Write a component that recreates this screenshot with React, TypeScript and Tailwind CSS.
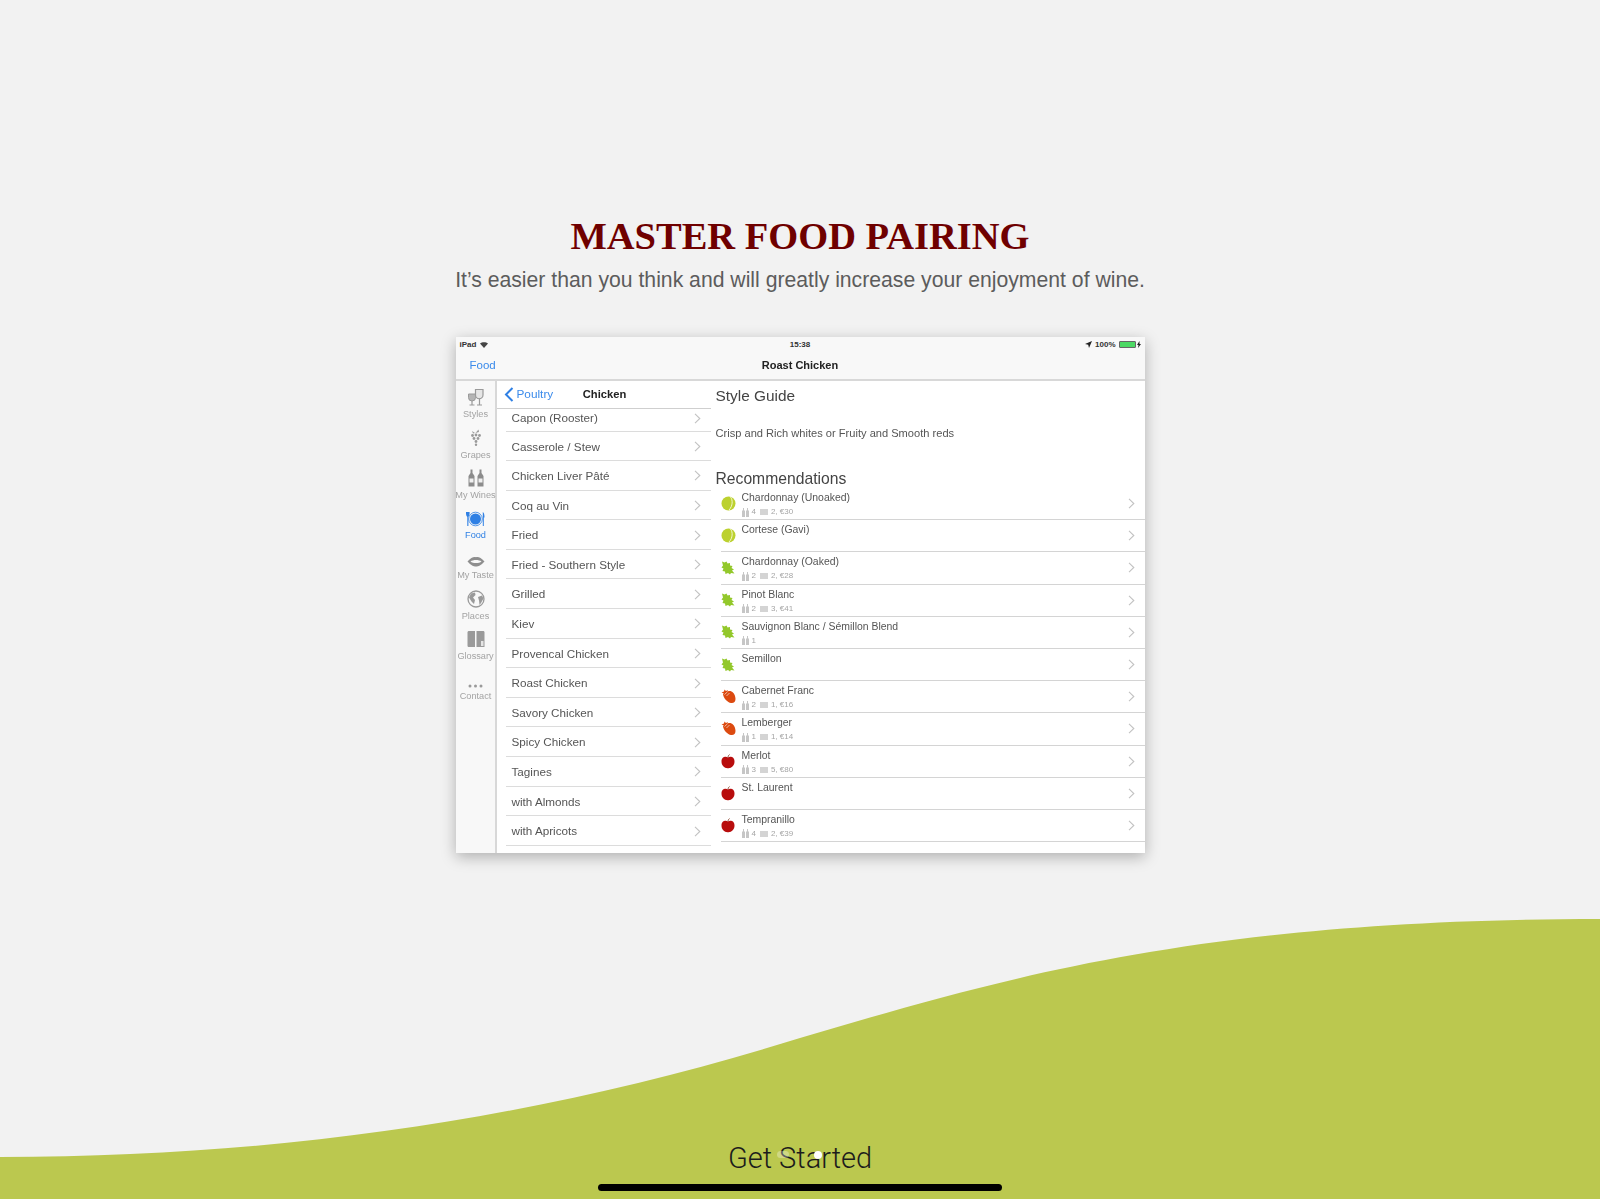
const sideTabs = [
  { label: "Styles", icon: "glasses" },
  { label: "Grapes", icon: "grapes" },
  { label: "My Wines", icon: "bottles" },
  { label: "Food", icon: "plate", active: true },
  { label: "My Taste", icon: "lips" },
  { label: "Places", icon: "globe" },
  { label: "Glossary", icon: "book" },
  { label: "Contact", icon: "dots" },
];

const dishes = [
  "Casserole / Stew",
  "Chicken Liver Pâté",
  "Coq au Vin",
  "Fried",
  "Fried - Southern Style",
  "Grilled",
  "Kiev",
  "Provencal Chicken",
  "Roast Chicken",
  "Savory Chicken",
  "Spicy Chicken",
  "Tagines",
  "with Almonds",
  "with Apricots",
];

const wines = [
  { name: "Chardonnay (Unoaked)", fruit: "lime", bottles: "4", rest: "2, €30" },
  { name: "Cortese (Gavi)", fruit: "lime" },
  { name: "Chardonnay (Oaked)", fruit: "leaf", bottles: "2", rest: "2, €28" },
  { name: "Pinot Blanc", fruit: "leaf", bottles: "2", rest: "3, €41" },
  { name: "Sauvignon Blanc / Sémillon Blend", fruit: "leaf", bottles: "1" },
  { name: "Semillon", fruit: "leaf" },
  { name: "Cabernet Franc", fruit: "berry", bottles: "2", rest: "1, €16" },
  { name: "Lemberger", fruit: "berry", bottles: "1", rest: "1, €14" },
  { name: "Merlot", fruit: "apple", bottles: "3", rest: "5, €80" },
  { name: "St. Laurent", fruit: "apple" },
  { name: "Tempranillo", fruit: "apple", bottles: "4", rest: "2, €39" },
];

function TabIcon({ name }: { name: string }) {
  const c = "#9a9a9a";
  if (name === "glasses")
    return (
      <svg width="18" height="18" viewBox="0 0 18 18" fill="none">
        <path d="M1.500 6h7v3.500a3.500 3.500 0 0 1-7 0z" fill="#b5b5b5" stroke={c} strokeWidth="1" />
        <path d="M8.500 1.500h7.500v5.500a3.700 3.700 0 0 1-7.500 0z" fill="#e6e6e6" stroke={c} strokeWidth="1.200" />
        <path d="M5 13v3.500M2.500 17h5M12.500 10.500v6M10 17h5" stroke={c} strokeWidth="1.200" />
      </svg>
    );
  if (name === "grapes")
    return (
      <svg width="14" height="18" viewBox="0 0 14 18" fill={c}>
        <path d="M6.500 4 9.500 0.500 10 3zM6 4 3 2 4 4.500z" />
        <circle cx="3.500" cy="6.500" r="1.400" />
        <circle cx="7" cy="6" r="1.400" />
        <circle cx="10.500" cy="6.500" r="1.400" />
        <circle cx="5" cy="9.500" r="1.400" />
        <circle cx="9" cy="9.500" r="1.400" />
        <circle cx="7" cy="12.500" r="1.400" />
        <circle cx="7" cy="15.800" r="1.200" />
      </svg>
    );
  if (name === "bottles")
    return (
      <svg width="16" height="18" viewBox="0 0 16 18" fill="#8c8c8c">
        <path d="M2.500 0.500h2v3.500l2 3v10.500h-6V7l2-3z" />
        <path d="M11.500 0.500h2v3.500l2 3v10.500h-6V7l2-3z" />
        <rect x="1.500" y="9.500" width="4" height="4" fill="#f0f0f0" />
        <rect x="10.500" y="9.500" width="4" height="4" fill="#f0f0f0" />
      </svg>
    );
  if (name === "plate")
    return (
      <svg width="19" height="16" viewBox="0 0 19 16" fill="#2f80e4">
        <circle cx="9.500" cy="8" r="5.500" />
        <circle cx="9.500" cy="8" r="6.800" fill="none" stroke="#2f80e4" strokeWidth="0.800" />
        <path d="M0 1h3.600v1.500C3.600 5 2.600 5.500 2.400 6v9H1.300V6C1.100 5.500 0 5 0 2.500z" />
        <path d="M16.800 1c1.200 0.500 1.700 2.500 1.700 5.500h-0.700V15h-1z" />
      </svg>
    );
  if (name === "lips")
    return (
      <svg width="18" height="11" viewBox="0 0 18 11" fill="none">
        <path d="M0.500 5.500C4 1.500 7 0.500 9 1.300 11 0.500 14 1.500 17.500 5.500 14 9.500 11.500 10.500 9 10.500S4 9.500 0.500 5.500z" fill="#8e8e8e" />
        <path d="M3.500 5.500C6 3.500 12 3.500 14.500 5.500 12 7.500 6 7.500 3.500 5.500z" fill="#f7f7f7" />
      </svg>
    );
  if (name === "globe")
    return (
      <svg width="18" height="18" viewBox="0 0 18 18" fill="none">
        <circle cx="9" cy="9" r="8" stroke={c} strokeWidth="1.300" />
        <path d="M2 7.500 4 3.500 8 2.500 8.500 5 6 7.500 8 10 7 14 4.500 11.500zM11 7l4-1.500 1.500 3L14 13l-1.500 2L12 10.500z" fill={c} />
      </svg>
    );
  if (name === "book")
    return (
      <svg width="18" height="18" viewBox="0 0 18 18" fill={c}>
        <path d="M0.500 2.500C0.500 1.500 1 1 2 1h6v16H2c-1 0-1.500-0.500-1.500-1.500z" />
        <path d="M9.500 1H16c1 0 1.500 0.500 1.500 1.500V17H9.500z" />
        <path d="M14 11h2.500v5H14z" fill="#e5e5e5" />
      </svg>
    );
  return (
    <svg width="15" height="4" viewBox="0 0 15 4" fill={c}>
      <circle cx="2" cy="2" r="1.500" />
      <circle cx="7.500" cy="2" r="1.500" />
      <circle cx="13" cy="2" r="1.500" />
    </svg>
  );
}

function FruitIcon({ name }: { name: string }) {
  if (name === "lime")
    return (
      <svg width="15" height="15" viewBox="0 0 15 15" fill="none">
        <circle cx="7.500" cy="7.500" r="7" fill="#bcd12f" />
        <path d="M9.500 1c2.500 3 2.300 9-1.500 13" stroke="#f3f7d0" strokeWidth="1" />
      </svg>
    );
  if (name === "leaf")
    return (
      <svg width="14" height="14" viewBox="0 0 14 14" fill="#93c82b">
        <path d="M1 0.500 3.500 1.500 5.500 0.500 6.500 2.500 9 2 9 4.500 11.500 5 10.500 7 13 8.500 11 9.500 13.500 12.500 10 12 9 13.500 7 12 4.500 13 4 10.500 1.500 10 2.500 7.500 0.500 6.500 2 4.500z" />
      </svg>
    );
  if (name === "berry")
    return (
      <svg width="15" height="15" viewBox="0 0 15 15">
        <path d="M2 5C4 2.500 8 1.500 10.500 2.500 13 3.500 14.500 7 14.500 10 14.500 13 12.500 14.500 10 14 6.500 13.500 2.500 9.500 2 5z" fill="#dc4a10" />
        <path d="M0.500 3.500 3 2.500 3.500 0.500 5 2 7 1 6 3.500 4 5.500 3 4.500z" fill="#dc4a10" />
        <path d="M3.500 5.500 6.500 2.800M5.500 7l3-3" stroke="#f8e8df" strokeWidth="0.700" />
      </svg>
    );
  return (
    <svg width="14" height="15" viewBox="0 0 14 15">
      <path d="M7 3.500C9 2 13.500 2.500 13.500 7.500 13.500 11.500 10.500 14.500 7 14.200 3.500 14.500 0.500 11.500 0.500 7.500 0.500 2.500 5 2 7 3.500z" fill="#b80d0d" />
      <path d="M7 3.500C7 2.500 7.500 1.300 8.500 0.500" stroke="#7a2a10" strokeWidth="0.800" fill="none" />
    </svg>
  );
}

function Chevron({ className }: { className: string }) {
  return (
    <svg width="7" height="11" viewBox="0 0 7 11" fill="none" className={className}>
      <path d="M1 0.800 5.800 5.500 1 10.200" stroke="#c2c2c2" strokeWidth="1.100" />
    </svg>
  );
}

function BottleGlyph() {
  return (
    <svg width="7" height="9" viewBox="0 0 7 9" fill="#c6c6c6">
      <path d="M0 3 1 2V0h1v2l1 1v6H0zM4 3l1-1V0h1v2l1 1v6H4z" />
    </svg>
  );
}

export default function App() {
  return (
    <div className="relative flex h-[1199px] flex-col items-center overflow-hidden bg-[#f2f2f2] font-['Liberation_Sans',Arial,sans-serif]">
      {/* green wave along the bottom */}
      <svg className="absolute bottom-0 left-0" width="1600" height="280" viewBox="0 0 1600 280">
        <path d="M0 238C300 238 560 194 800 119 1000 60 1200 0 1600 0V280H0z" fill="#bbc84f" />
      </svg>

      <h1 className="relative mt-[214px] font-['Liberation_Serif','Times_New_Roman',serif] text-[38.500px] leading-[44px] font-bold text-[#6f0000]">
        MASTER FOOD PAIRING
      </h1>
      <p className="relative mt-[7px] text-[21.200px] leading-[30px] text-[#5c5c5c]">
        It’s easier than you think and will greatly increase your enjoyment of wine.
      </p>

      {/* iPad screenshot */}
      <div className="relative mt-[42px] flex h-[516px] w-[689px] flex-col bg-white shadow-[0_4px_14px_rgba(0,0,0,0.28)] blur-[0.45px]">
        <div className="flex h-[44px] shrink-0 flex-col border-b-2 border-[#d8d8d8] bg-[#f8f8f8]">
          <div className="flex h-[15px] items-center justify-between px-1 text-[8px] font-bold text-[#333]">
            <div className="flex w-[100px] items-center gap-1">
              <span>iPad</span>
              <svg width="8" height="6" viewBox="0 0 8 6" fill="#444">
                <path d="M0 1.500C2 -0.300 6 -0.300 8 1.500L4 6z" />
              </svg>
            </div>
            <span>15:38</span>
            <div className="flex w-[100px] items-center justify-end gap-[3px]">
              <svg width="7" height="7" viewBox="0 0 7 7" fill="#222">
                <path d="M7 0 4 7 3.200 3.800 0 3z" />
              </svg>
              <span>100%</span>
              <div className="h-[7px] w-[17px] rounded-[1px] border border-[#666] bg-[#4cd964]" />
              <svg width="4" height="7" viewBox="0 0 4 7" fill="#222" className="-ml-[2px]">
                <path d="M2.500 0 0 4h1.500L1 7l3-4H2.500z" />
              </svg>
            </div>
          </div>
          <div className="relative flex flex-1 items-center justify-center text-[11px] font-bold text-[#222]">
            <span className="absolute left-[14px] text-[11.500px] font-normal text-[#3b8beb]">Food</span>
            Roast Chicken
          </div>
        </div>

        <div className="flex min-h-0 flex-1">
          <div className="flex w-[41px] shrink-0 flex-col items-center border-r-2 border-[#d8d8d8] bg-[#f8f8f8] pt-[4px] pl-[1px]">
            {sideTabs.map((t) => (
              <div
                key={t.label}
                className={`flex h-[40.300px] w-[40px] flex-col items-center justify-end pb-[6px] text-[9.200px] leading-[10px] whitespace-nowrap ${t.active ? "text-[#2f80e4]" : "text-[#a3a3a3]"}`}
              >
                <TabIcon name={t.icon} />
                <span className="mt-[3px]">{t.label}</span>
              </div>
            ))}
          </div>

          <div className="flex w-[214px] shrink-0 flex-col">
            <div className="relative flex h-[28px] shrink-0 items-center justify-center border-b border-[#cfcfcf] pl-[2px] text-[11.200px] font-bold text-[#222]">
              <div className="absolute left-[7px] flex items-center gap-[3px] text-[11.800px] font-normal text-[#3b8beb]">
                <svg width="10" height="15" viewBox="0 0 10 15" fill="none">
                  <path d="M8.500 1 2 7.500 8.500 14" stroke="#2f80e4" strokeWidth="2" />
                </svg>
                Poultry
              </div>
              Chicken
            </div>
            <div className="ml-[9px] flex h-[22.500px] shrink-0 items-end justify-between border-b border-[#dcdcdc] pr-[10px] pb-[6px] pl-[6px] text-[11.700px] leading-[14px] text-[#555]">
              <span>Capon (Rooster)</span>
              <Chevron className="mb-[1px]" />
            </div>
            {dishes.map((d) => (
              <div
                key={d}
                className="ml-[9px] flex h-[29.600px] shrink-0 items-center justify-between border-b border-[#dcdcdc] pt-[1px] pr-[10px] pl-[6px] text-[11.700px] text-[#555]"
              >
                {d}
                <Chevron className="" />
              </div>
            ))}
          </div>

          <div className="flex min-w-0 flex-1 flex-col pl-[5px] text-[#555]">
            <div className="mt-[4px] text-[15.400px] leading-[22px] text-[#444]">Style Guide</div>
            <div className="mt-[19px] text-[11.100px] leading-[14px]">Crisp and Rich whites or Fruity and Smooth reds</div>
            <div className="mt-[28px] text-[15.700px] leading-[22px] text-[#444]">Recommendations</div>
            <div className="-mt-[2px] ml-[5px] flex flex-col">
              {wines.map((w) => (
                <div
                  key={w.name}
                  className="flex h-[32.200px] shrink-0 items-center border-b border-[#d4d4d4] pr-[10px]"
                >
                  <div className="flex w-[21px] shrink-0 justify-start">
                    <FruitIcon name={w.fruit} />
                  </div>
                  <div className="flex min-w-0 flex-1 flex-col self-start pt-[3px]">
                    <span className="text-[10.450px] leading-[14px] text-[#555]">{w.name}</span>
                    {w.bottles && (
                      <span className="mt-[1px] flex items-center gap-[3px] text-[8px] leading-[12px] text-[#a5a5a5]">
                        <BottleGlyph />
                        {w.bottles}
                        {w.rest && (
                          <>
                            <span className="ml-[1px] h-[6px] w-[8px] bg-[#d4d4d4]" />
                            {w.rest}
                          </>
                        )}
                      </span>
                    )}
                  </div>
                  <Chevron className="" />
                </div>
              ))}
            </div>
          </div>
        </div>
      </div>

      {/* footer */}
      <div className="relative mt-auto flex w-full flex-col items-center">
        <div className="relative font-['Roboto',sans-serif] text-[29px] leading-[36px] font-light text-[#1c1c1c]">
          Get Started
          <span className="absolute top-[11px] left-[49px] h-[7px] w-[12px] rounded-full bg-white/30" />
          <span className="absolute top-[11px] left-[86px] h-[8px] w-[8px] rounded-full bg-white" />
        </div>
        <div className="mt-[8px] mb-[8px] h-[7px] w-[404px] rounded-full bg-black" />
      </div>
    </div>
  );
}
